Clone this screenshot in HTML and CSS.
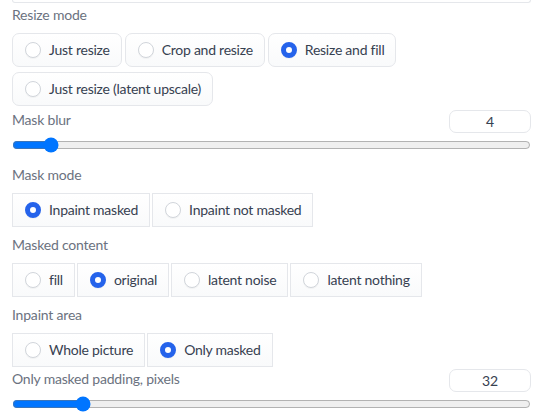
FILE: index.html
```html
<!DOCTYPE html>
<html>
<head>
<meta charset="utf-8">
<link rel="stylesheet" href="styles.css">
</head>
<body>
<div class="panel">
  <div class="top-frame"></div>

  <div class="block block-first">
    <div class="label">Resize mode</div>
    <div class="options rounded">
      <label class="opt"><span class="dot"></span><span class="txt">Just resize</span></label>
      <label class="opt"><span class="dot"></span><span class="txt">Crop and resize</span></label>
      <label class="opt"><span class="dot on"></span><span class="txt">Resize and fill</span></label>
      <label class="opt"><span class="dot"></span><span class="txt">Just resize (latent upscale)</span></label>
    </div>
  </div>

  <div class="slider-block sb-first">
    <div class="slider-head">
      <div class="label">Mask blur</div>
      <div class="num">4</div>
    </div>
    <input class="range" type="range" min="0" max="64" value="4">
  </div>

  <div class="block block-after-slider">
    <div class="label">Mask mode</div>
    <div class="options square">
      <label class="opt"><span class="dot on"></span><span class="txt">Inpaint masked</span></label>
      <label class="opt"><span class="dot"></span><span class="txt">Inpaint not masked</span></label>
    </div>
  </div>

  <div class="block">
    <div class="label">Masked content</div>
    <div class="options square">
      <label class="opt"><span class="dot"></span><span class="txt">fill</span></label>
      <label class="opt"><span class="dot on"></span><span class="txt">original</span></label>
      <label class="opt"><span class="dot"></span><span class="txt">latent noise</span></label>
      <label class="opt"><span class="dot"></span><span class="txt">latent nothing</span></label>
    </div>
  </div>

  <div class="block">
    <div class="label">Inpaint area</div>
    <div class="options square">
      <label class="opt"><span class="dot"></span><span class="txt">Whole picture</span></label>
      <label class="opt"><span class="dot on"></span><span class="txt">Only masked</span></label>
    </div>
  </div>

  <div class="slider-block sb-last">
    <div class="slider-head">
      <div class="label">Only masked padding, pixels</div>
      <div class="num">32</div>
    </div>
    <input class="range" type="range" min="0" max="256" value="32">
  </div>
</div>
</body>
</html>
```

FILE: styles.css
```css
html, body {
  margin: 0;
  padding: 0;
  background: #ffffff;
}

body {
  font-family: "Lato", "Liberation Sans", sans-serif;
  font-size: 14px;
  color: #374151;
  overflow: hidden;
}

.panel {
  width: 519px;
  margin-left: 12px;
  display: flex;
  flex-direction: column;
}

.top-frame {
  height: 2px;
  border: 1px solid #e5e7eb;
  border-top: none;
  border-radius: 0 0 7px 7px;
}

.label {
  color: #6b7280;
  line-height: 20px;
  font-size: 14px;
  letter-spacing: -0.2px;
}

.block {
  display: flex;
  flex-direction: column;
  gap: 8px;
  margin-top: 8px;
}

.block-first {
  margin-top: 2px;
}

.block-after-slider {
  margin-top: 12px;
}

.options {
  display: flex;
  flex-wrap: wrap;
}

.options.rounded {
  gap: 5px 3px;
}

.options.square {
  gap: 2px;
}

.opt {
  display: flex;
  align-items: center;
  gap: 8px;
  height: 34px;
  box-sizing: border-box;
  padding: 0 11px 0 12px;
  border: 1px solid #e5e7eb;
  background: linear-gradient(to bottom, #ffffff, #f9fafb);
  color: #374151;
  line-height: 20px;
  letter-spacing: -0.25px;
}

.options.rounded .opt {
  border-radius: 7px;
}

.dot {
  width: 16px;
  height: 16px;
  box-sizing: border-box;
  border-radius: 50%;
  border: 1px solid #d1d5db;
  background: #ffffff;
  box-shadow: 0 1px 1px rgba(0, 0, 0, 0.04);
  flex: none;
}

.dot.on {
  border: 5px solid #2563eb;
  background: #ffffff;
}

.slider-block {
  display: flex;
  flex-direction: column;
  margin-top: 4px;
}

.sb-last {
  margin-top: 2px;
}

.slider-head {
  display: flex;
  justify-content: space-between;
  align-items: flex-start;
  height: 23px;
}

.num {
  width: 82px;
  height: 23px;
  box-sizing: border-box;
  border: 1px solid #e5e7eb;
  border-radius: 7px;
  text-align: center;
  line-height: 21px;
  color: #374151;
  font-size: 14px;
}

.range {
  display: block;
  width: 519px;
  height: 16px;
  margin: 4px 0 0 0;
  padding: 0;
}
```
